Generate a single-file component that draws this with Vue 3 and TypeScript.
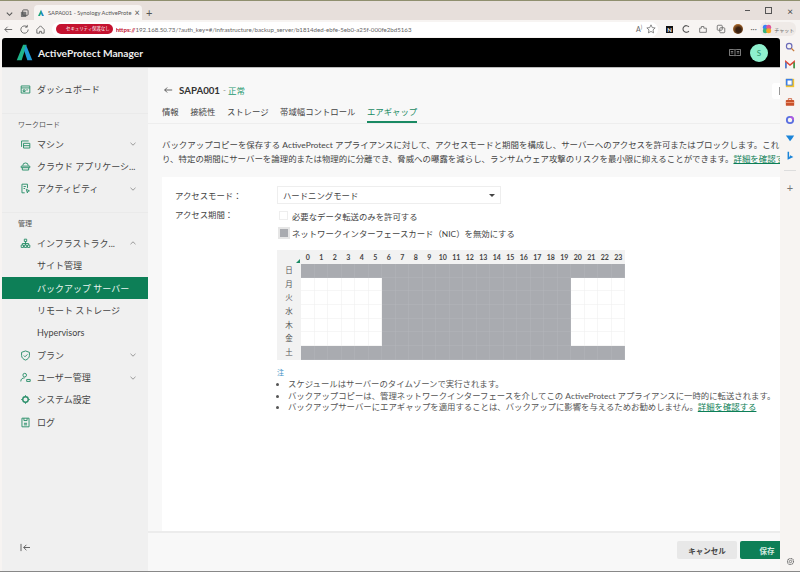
<template>
  <div class="window">
    <!-- browser tab strip -->
    <div class="tabstrip">
      <div class="strip-left">
        <svg class="ico10" viewBox="0 0 10 10"><path d="M2 4l3 3 3-3" fill="none" stroke="#555" stroke-width="1.2" /></svg>
        <svg class="ico10" viewBox="0 0 10 10"><rect x="1" y="3" width="6" height="6" rx="1" fill="#777" /><rect x="3" y="1" width="6" height="6" rx="1" fill="none" stroke="#555" /></svg>
      </div>
      <div class="tab">
        <svg class="fav" viewBox="0 0 24 24"><path d="M12 2L3 21h6l3-7z" fill="#1fa67a" /><path d="M12 2l9 19h-6l-3-7z" fill="#1d8fc4" /></svg>
        <span class="tab-title">SAPA001 - Synology ActiveProte</span>
        <span class="tab-x">×</span>
      </div>
      <span class="tab-plus">+</span>
      <div class="win-btns">
        <span class="win-min"></span>
        <span class="win-max"></span>
        <span class="win-x">×</span>
      </div>
    </div>

    <!-- browser toolbar -->
    <div class="toolbar">
      <svg class="nav-ico" viewBox="0 0 12 12"><path d="M10 6H2M5 3L2 6l3 3" fill="none" stroke="#666" stroke-width="1" /></svg>
      <svg class="nav-ico" viewBox="0 0 12 12"><path d="M10 6a4 4 0 1 1-1.2-2.8M9 1v2.4H6.6" fill="none" stroke="#666" stroke-width="1" /></svg>
      <svg class="nav-ico" viewBox="0 0 12 12"><path d="M2 6l4-4 4 4v4H7V8H5v2H2z" fill="none" stroke="#666" stroke-width="1" /></svg>
      <div class="urlbar">
        <span class="sec-pill">セキュリティ保護なし</span>
        <span class="url"><span class="url-red">https://</span>192.168.50.73/?auth_key=#/infrastructure/backup_server/b1814ded-ebfe-5eb0-a25f-000fe2bd5163</span>
        <span class="url-a">A<sup>)</sup></span>
        <svg class="tool-ico" viewBox="0 0 12 12"><path d="M6 1l1.5 3.3 3.5.4-2.6 2.4.7 3.5L6 8.9l-3.1 1.7.7-3.5L1 4.7l3.5-.4z" fill="none" stroke="#666" stroke-width=".9" /></svg>
      </div>
      <div class="tool-group">
        <span class="notion">N</span>
        <svg class="tool-ico" viewBox="0 0 12 12"><path d="M9.5 3.5a4 4 0 1 0 0 5" fill="none" stroke="#555" stroke-width="1.3" /></svg>
        <svg class="tool-ico" viewBox="0 0 12 12"><path d="M2 5h2V3h3v2h3v5H2z" fill="none" stroke="#666" stroke-width="1" /></svg>
        <svg class="tool-ico" viewBox="0 0 12 12"><rect x="1.5" y="1.5" width="6" height="6" rx="1" fill="none" stroke="#666" /><rect x="4.5" y="4.5" width="6" height="6" rx="1" fill="none" stroke="#666" /></svg>
        <span class="avatar-pic"></span>
        <span class="dots">···</span>
        <span class="chat"><svg class="chat-ico" viewBox="0 0 12 12"><circle cx="4" cy="4" r="3" fill="#3b82f6" /><circle cx="8" cy="4" r="3" fill="#e0559a" /><circle cx="4" cy="8" r="3" fill="#35b37e" /><circle cx="8" cy="8" r="3" fill="#f5a623" /></svg>チャット</span>
      </div>
    </div>

    <div class="body-row">
      <div class="app">
        <header class="app-header">
          <svg class="logo" viewBox="0 0 24 24">
            <path d="M10 1h5L8 23H1z" fill="#1fb58a" />
            <path d="M14 1l9 22h-7L11.5 9z" fill="#1f9ad6" />
          </svg>
          <span class="brand">ActiveProtect Manager</span>
          <span class="spacer"></span>
          <svg class="book" viewBox="0 0 24 16"><path d="M12 3v11M1 2h8c2 0 3 .5 3 1 0-.5 1-1 3-1h8v12h-8c-2 0-3 .5-3 1 0-.5-1-1-3-1H1zM3.5 6h5M3.5 9h5M15.500 6h5M15.500 9h5" fill="none" stroke="#ccc" stroke-width="1.200" /></svg>
          <span class="user-badge">S</span>
        </header>

        <div class="app-body">
          <aside class="sidebar">
            <nav class="nav">
              <template v-for="item in navItems" :key="item.label">
                <div v-if="item.kind === 'head'" class="nav-head">{{ item.label }}</div>
                <div v-else class="nav-item" :class="{ active: item.active, sub: item.kind === 'sub' }">
                  <svg v-if="item.icon" class="nav-icon" viewBox="0 0 14 14" v-html="item.icon"></svg>
                  <span class="nav-label">{{ item.label }}</span>
                  <svg v-if="item.chevron" class="chev" viewBox="0 0 8 8">
                    <path :d="item.chevron === 'up' ? 'M1.500 5.200L4 2.800l2.500 2.400' : 'M1.500 2.800L4 5.200l2.500-2.400'" fill="none" stroke="#999" stroke-width="1" />
                  </svg>
                </div>
              </template>
            </nav>
            <svg class="collapse" viewBox="0 0 12 10"><path d="M1 1v8M11 5H4M7 2L4 5l3 3" fill="none" stroke="#555" stroke-width="1" /></svg>
          </aside>

          <main class="content">
            <div class="title-row">
              <svg class="back" viewBox="0 0 12 12"><path d="M11 6H2M5 3L2 6l3 3" fill="none" stroke="#444" stroke-width="1" /></svg>
              <span class="title">SAPA001</span>
              <span class="status-sep">-</span>
              <span class="status">正常</span>
            </div>
            <div class="tabs">
              <span v-for="t in tabs" :key="t" class="tab-link" :class="{ current: t === 'エアギャップ' }">{{ t }}</span>
            </div>
            <p class="desc">
              <span class="line">バックアップコピーを保存する ActiveProtect アプライアンスに対して、アクセスモードと期間を構成し、サーバーへのアクセスを許可またはブロックします。これによ</span>
              <span class="line">り、特定の期間にサーバーを論理的または物理的に分離でき、脅威への曝露を減らし、ランサムウェア攻撃のリスクを最小限に抑えることができます。<a class="link">詳細を確認する</a></span>
            </p>

            <section class="card">
              <div class="form-row mode-row">
                <label class="form-label">アクセスモード：</label>
                <div class="select">
                  <span>ハードニングモード</span>
                  <span class="caret"></span>
                </div>
              </div>
              <div class="form-row period-row">
                <label class="form-label">アクセス期間：</label>
                <div class="checks">
                  <div class="check"><span class="box"></span>必要なデータ転送のみを許可する</div>
                  <div class="check nic"><span class="box filled"></span>ネットワークインターフェースカード（NIC）を無効にする</div>
                </div>
              </div>

              <div class="grid">
                <div class="corner"><span class="corner-mark"></span></div>
                <div v-for="h in hours" :key="'h' + h" class="hour">{{ h }}</div>
                <template v-for="(day, d) in days" :key="day">
                  <div class="day">{{ day }}</div>
                  <div v-for="h in hours" :key="day + h" class="cell" :class="{ on: isBlocked(d, h) }"></div>
                </template>
              </div>

              <div class="notes">
                <div class="note-head">注</div>
                <ul>
                  <li>スケジュールはサーバーのタイムゾーンで実行されます。</li>
                  <li>バックアップコピーは、管理ネットワークインターフェースを介してこの ActiveProtect アプライアンスに一時的に転送されます。</li>
                  <li>バックアップサーバーにエアギャップを適用することは、バックアップに影響を与えるためお勧めしません。<a class="link">詳細を確認する</a></li>
                </ul>
              </div>
            </section>

            <footer class="footer">
              <button class="btn cancel">キャンセル</button>
              <button class="btn save">保存</button>
            </footer>
            <div class="float-btn"></div>
          </main>
        </div>
      </div>

      <!-- edge sidebar -->
      <div class="edge">
        <svg class="edge-ico" viewBox="0 0 12 12"><circle cx="5" cy="5" r="3.300" fill="none" stroke="#6a6ab8" stroke-width="1.400" /><path d="M7.500 7.500L11 11" stroke="#c77a3a" stroke-width="1.500" /></svg>
        <svg class="edge-ico" viewBox="0 0 12 12"><path d="M1 10V2l5 4 5-4v8" fill="none" stroke="#e04434" stroke-width="1.800" /><path d="M1 10V3" stroke="#3a86e8" stroke-width="1.800" /><path d="M11 10V3" stroke="#2da44e" stroke-width="1.800" /></svg>
        <svg class="edge-ico" viewBox="0 0 12 12"><rect x="1" y="1" width="10" height="10" fill="#f2c230" /><rect x="1" y="1" width="8" height="8" fill="#3a7de8" /><rect x="3" y="3" width="5" height="5" fill="#fff" /></svg>
        <svg class="edge-ico" viewBox="0 0 12 12"><rect x="1" y="3.500" width="10" height="7" rx="1" fill="#c9512a" /><path d="M4 3.500V2h4v1.500" fill="none" stroke="#c9512a" /><rect x="1" y="6" width="10" height="1" fill="#f0a080" /></svg>
        <svg class="edge-ico" viewBox="0 0 12 12"><circle cx="6" cy="6" r="3.800" fill="none" stroke="#5b6fe0" stroke-width="2.200" /><path d="M6 2.200a3.800 3.800 0 0 1 3.800 3.800" fill="none" stroke="#b05be0" stroke-width="2.200" /></svg>
        <svg class="edge-ico" viewBox="0 0 12 12"><path d="M1 3h10L8.500 7 6 10 4 7z" fill="#1b84d8" /></svg>
        <svg class="edge-ico" viewBox="0 0 12 12"><path d="M4 1v8l4-1.800L5.800 6" fill="none" stroke="#1b84d8" stroke-width="1.800" /></svg>
        <span class="edge-sep"></span>
        <span class="edge-plus">+</span>
        <span class="spacer"></span>
        <svg class="edge-gear" viewBox="0 0 12 12"><circle cx="6" cy="6" r="1.600" fill="none" stroke="#666" /><circle cx="6" cy="6" r="4" fill="none" stroke="#666" stroke-dasharray="1.600 .8" stroke-width="1.400" /></svg>
      </div>
    </div>
  </div>
</template>

<script setup lang="ts">
interface NavItem {
  kind: 'item' | 'head' | 'sub'
  label: string
  icon?: string
  chevron?: 'up' | 'down'
  active?: boolean
}

const stroke = 'fill="none" stroke="#2a8f6a" stroke-width="1.200"'

const navItems: NavItem[] = [
  { kind: 'item', label: 'ダッシュボード', icon: `<path d="M1.500 2.500h11v9h-11zM1.500 5h11M4 7.500h2.500v2H4zM8 7.500h2" ${stroke}/>` },
  { kind: 'head', label: 'ワークロード' },
  { kind: 'item', label: 'マシン', chevron: 'down', icon: `<path d="M2 10V2.500h9M4.500 5.500h8v6h-8zM4.500 8.500h8" ${stroke}/>` },
  { kind: 'item', label: 'クラウド アプリケーシ...', icon: `<path d="M3.500 6a3.500 3.500 0 0 1 7 0M1.500 6.500h11v2h-11zM3 8.500v3h8v-3" ${stroke}/>` },
  { kind: 'item', label: 'アクティビティ', chevron: 'down', icon: `<path d="M6 12.500H2.500v-11h7v5M4.500 4.500h3M4.500 7h2M8 8l4 2-2 .6-.6 2z" ${stroke}/>` },
  { kind: 'head', label: '管理' },
  { kind: 'item', label: 'インフラストラク...', chevron: 'up', icon: `<path d="M5.500 1.500h3v3h-3zM1.500 9h3v3h-3zM5.500 9h3v3h-3zM9.500 9h3v3h-3zM7 4.500V9M3 9V7h8v2" ${stroke}/>` },
  { kind: 'sub', label: 'サイト管理' },
  { kind: 'sub', label: 'バックアップ サーバー', active: true },
  { kind: 'sub', label: 'リモート ストレージ' },
  { kind: 'sub', label: 'Hypervisors' },
  { kind: 'item', label: 'プラン', chevron: 'down', icon: `<path d="M7 1.200l5 1.800v4c0 3-2.500 5-5 5.800C4.500 12 2 10 2 7V3zM4.800 7l1.600 1.600 3-3" ${stroke}/>` },
  { kind: 'item', label: 'ユーザー管理', chevron: 'down', icon: `<circle cx="6" cy="4" r="2.300" ${stroke}/><path d="M1 12c0-3 2-4.500 5-4.500M8.500 9.500h4.500v2.500H8.500z" ${stroke}/>` },
  { kind: 'item', label: 'システム設定', icon: `<circle cx="7" cy="7" r="3.500" fill="none" stroke="#2a8f6a" stroke-width="1.800"/><path d="M7 1.500v2M7 10.500v2M1.500 7h2M10.500 7h2" ${stroke}/>` },
  { kind: 'item', label: 'ログ', icon: `<path d="M2.500 1.500h9v11h-9zM5 1.500v3h4v-3M5 8h4M5 10h4" ${stroke}/>` }
]

const tabs = ['情報', '接続性', 'ストレージ', '帯域幅コントロール', 'エアギャップ']
const hours = Array.from({ length: 24 }, (_, i) => i)
const days = ['日', '月', '火', '水', '木', '金', '土']

// weekends are blocked all day, weekdays only during 6-19
const isBlocked = (day: number, hour: number) => {
  if (day === 0 || day === 6) return true
  return hour >= 6 && hour <= 19
}
</script>

<style scoped>
.window {
  width: 800px;
  height: 572px;
  display: flex;
  flex-direction: column;
  overflow: hidden;
  box-sizing: border-box;
  border-top: 1px solid #8f8f6e;
  border-bottom: 1px solid #888;
  font-family: Lato, "Noto Sans CJK JP", sans-serif;
  background: #f7f4f2;
  color: #444;
}

.tabstrip {
  height: 19px;
  flex: none;
  display: flex;
  align-items: flex-end;
  background: #e7dfdb;
  position: relative;
}

.strip-left {
  display: flex;
  gap: 6px;
  padding: 0 5px 2px 5px;
  align-items: center;
}

.ico10 {
  width: 9px;
  height: 9px;
}

.tab {
  width: 108px;
  height: 15px;
  flex: none;
  box-sizing: border-box;
  background: #f7f4f2;
  border-radius: 4px 4px 0 0;
  display: flex;
  align-items: center;
  padding: 0 4px 0 3px;
  gap: 3px;
}

.fav {
  width: 8px;
  height: 8px;
  flex: none;
}

.tab-title {
  font-size: 5.800px;
  color: #555;
  white-space: nowrap;
  flex: 1;
}

.tab-x {
  font-size: 9px;
  color: #555;
  line-height: 1;
}

.tab-plus {
  font-size: 11px;
  line-height: 1;
  color: #555;
  margin: 0 0 2px 4px;
}

.win-btns {
  margin-left: auto;
  align-self: center;
  display: flex;
  align-items: center;
  gap: 15px;
  padding-right: 7px;
}

.win-min {
  width: 5px;
  height: 1px;
  background: #555;
}

.win-max {
  width: 5px;
  height: 5px;
  border: 1px solid #555;
}

.win-x {
  font-size: 10px;
  line-height: 1;
  color: #444;
}

.toolbar {
  height: 18px;
  flex: none;
  display: flex;
  align-items: center;
  padding-left: 3px;
  background: #f7f4f2;
}

.nav-ico {
  width: 11px;
  height: 11px;
  margin-right: 5px;
  flex: none;
}

.urlbar {
  width: 606px;
  height: 15px;
  flex: none;
  margin-left: 1px;
  display: flex;
  align-items: center;
  background: #fff;
  border-radius: 8px;
  padding: 0 2px 0 4px;
  box-sizing: border-box;
}

.sec-pill {
  background: #c4122f;
  color: #fff;
  font-size: 4.400px;
  height: 10px;
  line-height: 10px;
  border-radius: 5px;
  padding: 0 3px 0 10px;
  white-space: nowrap;
  flex: none;
}

.url {
  font-size: 6.150px;
  color: #666;
  white-space: nowrap;
  margin-left: 3px;
  flex: 1;
  overflow: hidden;
}

.url-red {
  color: #c4122f;
  font-weight: 700;
}

.url-a {
  font-size: 7px;
  color: #666;
  margin-right: 4px;
}

.url-a sup {
  font-size: 5px;
}

.tool-ico {
  width: 10px;
  height: 10px;
  flex: none;
}

.tool-group {
  display: flex;
  align-items: center;
  gap: 7.500px;
  margin-left: 8px;
}

.notion {
  width: 7px;
  height: 7px;
  line-height: 7px;
  background: #111;
  color: #fff;
  font-size: 6px;
  font-weight: 700;
  text-align: center;
}

.avatar-pic {
  width: 10px;
  height: 10px;
  border-radius: 50%;
  background: radial-gradient(circle at 55% 60%, #3a2010 30%, #a8682c 70%);
}

.dots {
  font-size: 8px;
  color: #555;
  line-height: 1;
}

.chat {
  display: flex;
  align-items: center;
  gap: 2px;
  font-size: 5px;
  color: #666;
  background: #efeae7;
  border-radius: 6px;
  padding: 2px 2px;
  margin-left: -4px;
  white-space: nowrap;
}

.chat-ico {
  width: 10px;
  height: 10px;
}

.body-row {
  flex: 1;
  min-height: 0;
  display: flex;
}

.app {
  width: 778px;
  margin-left: 2px;
  flex: none;
  display: flex;
  flex-direction: column;
  border-radius: 3px 3px 0 0;
  overflow: hidden;
}

.app-header {
  height: 29px;
  flex: none;
  background: #000;
  display: flex;
  align-items: center;
  padding: 0 12px 0 14px;
  border-bottom: 1px solid #bbb;
}

.logo {
  width: 17px;
  height: 17px;
  flex: none;
}

.brand {
  color: #eee;
  font-size: 10.200px;
  font-weight: 700;
  margin-left: 5px;
  white-space: nowrap;
}

.spacer {
  flex: 1;
}

.book {
  width: 12px;
  height: 9px;
  margin-right: 9px;
}

.user-badge {
  width: 18px;
  height: 18px;
  border-radius: 50%;
  background: #8ef0cd;
  color: #2a8f6a;
  font-size: 8px;
  text-align: center;
  line-height: 18px;
}

.app-body {
  flex: 1;
  min-height: 0;
  display: flex;
}

.sidebar {
  width: 146px;
  flex: none;
  background: #f0f0f0;
  display: flex;
  flex-direction: column;
  padding-top: 10.500px;
  box-sizing: border-box;
}

.nav {
  flex: 1;
}

.nav-item {
  height: 22.400px;
  display: flex;
  align-items: center;
  padding: 0 11px 0 18px;
  font-size: 9px;
  color: #444;
  white-space: nowrap;
}

.nav-icon {
  width: 11px;
  height: 11px;
  flex: none;
  margin-right: 6px;
}

.nav-label {
  flex: 1;
}

.nav-item.sub {
  padding-left: 35px;
}

.nav-item.active {
  background: #0d7f57;
  color: #e8f5ef;
}

.chev {
  width: 8px;
  height: 8px;
  flex: none;
}

.nav-head {
  font-size: 7px;
  color: #555;
  height: 12px;
  line-height: 12px;
  padding-left: 16px;
  margin: 12px 0 3px;
  border-top: 1px solid #eaeaea;
  padding-top: 4px;
}

.collapse {
  width: 11px;
  height: 9px;
  margin: 0 0 19px 18px;
  flex: none;
}

.content {
  flex: 1;
  min-width: 0;
  background: #f8f8f8;
  display: flex;
  flex-direction: column;
  position: relative;
  overflow: hidden;
}

.title-row {
  display: flex;
  align-items: center;
  height: 16px;
  margin: 14px 0 0 15px;
  font-size: 9.700px;
}

.back {
  width: 10px;
  height: 10px;
  margin-right: 6px;
}

.title {
  font-weight: 700;
  color: #333;
}

.status-sep {
  font-size: 8px;
  color: #888;
  margin: 0 2px 0 3px;
}

.status {
  color: #1f9870;
  font-size: 8.500px;
}

.tabs {
  display: flex;
  gap: 11.500px;
  padding-left: 14px;
  margin-top: 7px;
  border-bottom: 1px solid #eee;
  flex: none;
}

.tab-link {
  font-size: 8.400px;
  height: 18px;
  line-height: 15px;
  color: #444;
  white-space: nowrap;
  box-sizing: border-box;
}

.tab-link.current {
  color: #1a8a63;
  border-bottom: 2px solid #1a8a63;
  margin-bottom: -1px;
}

.desc {
  margin: 14px 0 0 14px;
  font-size: 8.450px;
  line-height: 14px;
  color: #444;
  flex: none;
}

.line {
  display: block;
  white-space: nowrap;
}

.link {
  color: #0d7f57;
  text-decoration: underline;
}

.card {
  flex: 1;
  min-height: 0;
  margin: 11px 0 0 14px;
  background: #fff;
  padding: 8px 0 0 13px;
  box-sizing: border-box;
}

.form-row {
  display: flex;
  font-size: 8.400px;
}

.form-label {
  width: 102px;
  flex: none;
  color: #444;
}

.mode-row {
  align-items: center;
  height: 20px;
}

.select {
  width: 224px;
  height: 18px;
  box-sizing: border-box;
  border: 1px solid #eee;
  display: flex;
  align-items: center;
  padding: 0 5px;
  justify-content: space-between;
  color: #444;
}

.caret {
  width: 0;
  height: 0;
  border-left: 3px solid transparent;
  border-right: 3px solid transparent;
  border-top: 3px solid #444;
}

.period-row {
  margin-top: 3px;
}

.period-row .form-label {
  line-height: 15px;
}

.check {
  display: flex;
  align-items: center;
  height: 15px;
  color: #444;
  white-space: nowrap;
}

.check.nic {
  margin-top: 3px;
  height: 14px;
}

.box {
  width: 7px;
  height: 7px;
  border: 1px solid #eee;
  margin: 0 4px 0 2px;
  flex: none;
}

.box.filled {
  width: 8px;
  height: 8px;
  background: #a9abb0;
  border: 2px solid #e6e6e6;
  margin: 0 2px 0 1px;
}

.grid {
  margin: 10px 0 0 102px;
  width: 348px;
  display: grid;
  grid-template-columns: 24px repeat(24, 13.500px);
  grid-template-rows: 14px repeat(7, 13.700px);
}

.corner {
  background: #f2f2f2;
  position: relative;
}

.corner-mark {
  position: absolute;
  right: 1px;
  bottom: 1px;
  width: 0;
  height: 0;
  border-left: 4px solid transparent;
  border-bottom: 4px solid #1a8a63;
}

.hour {
  background: #f2f2f2;
  font-size: 7px;
  font-weight: 700;
  color: #444;
  text-align: center;
  line-height: 14px;
}

.day {
  background: #f2f2f2;
  font-size: 7.500px;
  color: #555;
  text-align: center;
  line-height: 13.700px;
}

.cell {
  background: #fff;
  box-shadow: inset -0.500px -0.500px 0 #eee;
}

.cell.on {
  background: #a9abb0;
  box-shadow: inset -0.500px -0.500px 0 #b4b6ba;
}

.notes {
  margin: 7px 0 0 102px;
  font-size: 8.400px;
  line-height: 11.500px;
  color: #555;
  white-space: nowrap;
}

.note-head {
  color: #3a8fc4;
  font-size: 7px;
}

.notes ul {
  margin: 1px 0 0;
  padding: 0 0 0 11px;
}

.footer {
  height: 40px;
  flex: none;
  background: #f8f8f8;
  border-top: 2px solid #ececec;
  display: flex;
  justify-content: flex-end;
  align-items: flex-start;
  gap: 3px;
  padding-top: 8px;
  box-sizing: border-box;
}

.btn {
  height: 18px;
  border: none;
  font-family: inherit;
  font-size: 7.500px;
  font-weight: 700;
  padding: 0;
  flex: none;
}

.cancel {
  width: 60px;
  background: #e8e8e8;
  color: #444;
  border-radius: 2px;
}

/* the button runs past the visible part of the page, as in the shot */
.save {
  width: 54px;
  margin-right: -14px;
  background: #0d7f57;
  color: #d5ece2;
  border-radius: 2px;
}

.float-btn {
  position: absolute;
  top: 15px;
  right: 0;
  width: 8px;
  height: 16px;
  background: #fff;
  border-radius: 3px 0 0 3px;
}

.float-btn::after {
  content: "";
  position: absolute;
  right: 0;
  top: 4px;
  width: 1px;
  height: 8px;
  background: #999;
}

.edge {
  flex: 1;
  display: flex;
  flex-direction: column;
  align-items: center;
  padding: 4px 0 5px;
  gap: 8.200px;
}

.edge-ico {
  width: 10px;
  height: 10px;
  flex: none;
}

.edge-sep {
  width: 12px;
  height: 1px;
  background: #ddd;
  margin-top: 1px;
}

.edge-plus {
  font-size: 11px;
  line-height: 11px;
  color: #777;
  margin-top: 2px;
}

.edge-gear {
  width: 9px;
  height: 9px;
  flex: none;
}
</style>

<style>
html,
body {
  margin: 0;
  overflow: hidden;
}
</style>
